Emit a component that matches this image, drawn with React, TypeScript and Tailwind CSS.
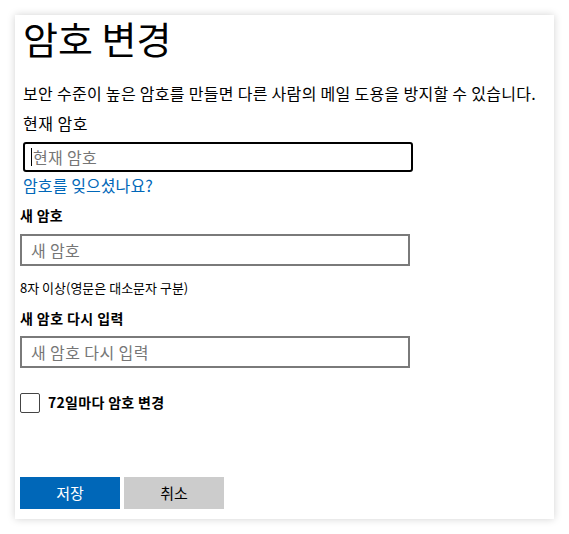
import React from "react";

export default function App() {
  const font = { fontFamily: '"Noto Sans CJK KR", "Noto Sans", sans-serif' };
  return (
    <div className="w-[569px] h-[534px] bg-white pt-[15px] pl-[15px]" style={font}>
      <div className="w-[539px] h-[504px] bg-white shadow-[0_0_8px_rgba(0,0,0,0.18)] px-[5px] flex flex-col text-black">
        <div className="pl-[3px] flex flex-col">
          <h1 className="text-[38px] leading-[44px] mt-[1px] font-normal">암호 변경</h1>
          <p className="text-[16px] leading-[20px] mt-[23px] tracking-[0.3px] whitespace-nowrap">보안 수준이 높은 암호를 만들면 다른 사람의 메일 도용을 방지할 수 있습니다.</p>
          <label className="text-[16px] leading-[20px] mt-[10px] tracking-[0.5px]">현재 암호</label>
          <div className="mt-[9px] w-[390px] h-[30px] border-2 border-black rounded-[3px] flex items-center pl-[6px]">
            <span className="w-px h-[18px] bg-black mr-[1px]" />
            <span className="text-[16px] tracking-[0.3px] text-[#767676]">현재 암호</span>
          </div>
          <a className="text-[16px] leading-[20px] mt-[3px] text-[#0067b8] tracking-[0.1px]">암호를 잊으셨나요?</a>
        </div>
        <div className="text-[14px] leading-[20px] font-bold mt-[10px] tracking-[0.3px]">새 암호</div>
        <div className="mt-[9px] w-[390px] h-[32px] border-2 border-[#7a7a7a] flex items-center pl-[9px]">
          <span className="text-[16px] tracking-[0.3px] text-[#767676]">새 암호</span>
        </div>
        <div className="text-[13px] leading-[18px] mt-[13px]">8자 이상(영문은 대소문자 구분)</div>
        <div className="text-[14px] leading-[20px] font-bold mt-[11px] tracking-[0.4px]">새 암호 다시 입력</div>
        <div className="mt-[8px] w-[390px] h-[32px] border-2 border-[#7a7a7a] flex items-center pl-[9px]">
          <span className="text-[16px] tracking-[0.4px] text-[#767676]">새 암호 다시 입력</span>
        </div>
        <div className="flex items-center mt-[24px]">
          <div className="w-[20px] h-[20px] border border-[#444] rounded-[2px] bg-white" />
          <span className="ml-[8px] text-[14px] font-bold tracking-[0.3px]">72일마다 암호 변경</span>
        </div>
        <div className="flex gap-[4px] mt-[64px]">
          <button className="w-[100px] h-[32px] bg-[#0067b8] text-white text-[15px]">저장</button>
          <button className="w-[100px] h-[32px] bg-[#cccccc] text-black text-[15px]">취소</button>
        </div>
      </div>
    </div>
  );
}
